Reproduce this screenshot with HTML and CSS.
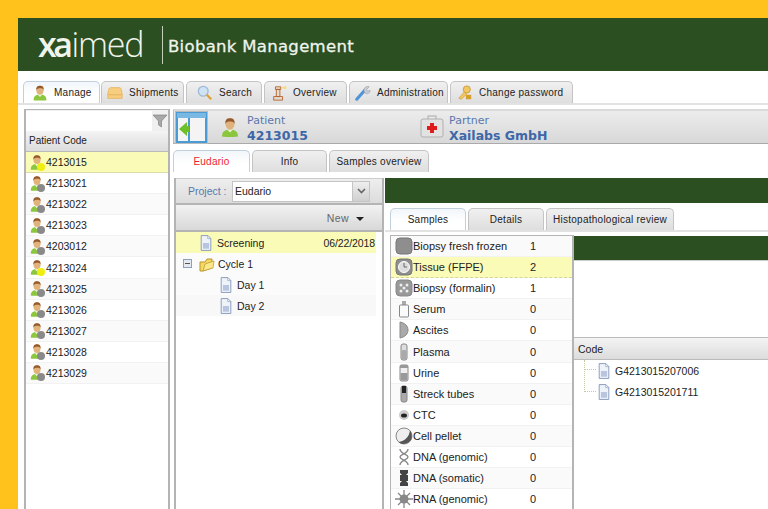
FILE: index.html
```html
<!DOCTYPE html>
<html lang="en">
<head>
    <meta charset="UTF-8">
    <meta name="viewport" content="width=device-width, initial-scale=1.0">
    <title>Xaimed - Biobank Management</title>
    <link rel="stylesheet" href="styles.css">
</head>
<body>
    <svg class="defs" width="0" height="0">
        <symbol id="person" viewBox="0 0 18 20">
            <path d="M1 19c0-5 3-7 8-7s8 2 8 7c0 .6-16 .6-16 0z" fill="#8cc63f"/>
            <path d="M6 12l3 3 3-3z" fill="#e9f3d0"/>
            <ellipse cx="9" cy="6.500" rx="4.500" ry="5.500" fill="#e2b27c"/>
            <path d="M4.400 6.500C4 2 6 .8 9 .8s5 1.200 4.600 5.700C13 4.500 11.500 3.800 9 4 7 4 5 4.500 4.400 6.500z" fill="#96592a"/>
        </symbol>
        <symbol id="doc" viewBox="0 0 16 18">
            <path d="M2.500 .5h7.500l3.500 3.500v13.500h-11z" fill="#eef2f9" stroke="#7f93b8"/>
            <path d="M10 .5v3.500h3.500z" fill="#fff" stroke="#7f93b8" stroke-width=".7"/>
            <rect x="4.500" y="9" width="7" height="6.500" fill="#b9c5de"/>
        </symbol>
    </svg>

    <div class="app">
        <header class="top">
            <div class="logo"><b>xa</b>imed</div>
            <div class="title">Biobank Management</div>
        </header>

        <nav class="tabs main-tabs">
            <div class="tab on">
                <svg class="ic"><use href="#person"/></svg>Manage
            </div>
            <div class="tab">
                <svg class="ic" viewBox="0 0 18 18"><path d="M4 3h10c1.500 0 2 1 3 7v5H1v-5c1-6 1.500-7 3-7z" fill="#f7cd80" stroke="#e8b45e"/><path d="M1 11h16" stroke="#e6b05a"/></svg>Shipments
            </div>
            <div class="tab">
                <svg class="ic" viewBox="0 0 18 18"><circle cx="7" cy="7" r="5.500" fill="#cfe3f5" stroke="#9dbbd8" stroke-width="1.500"/><path d="M11 11l5 5" stroke="#e0a030" stroke-width="2.500"/></svg>Search
            </div>
            <div class="tab">
                <svg class="ic" viewBox="0 0 18 18"><path d="M5 2h6v3H5zM6 5h4v8H6zM3 13h10v4H3z" fill="#e4dccf" stroke="#b5602c"/><path d="M11 3l6-2v4z" fill="#f7dc6f"/></svg>Overview
            </div>
            <div class="tab">
                <svg class="ic" viewBox="0 0 18 18"><path d="M2 16L11 6" stroke="#4f93d8" stroke-width="3.500" stroke-linecap="round"/><path d="M10 6c0-3 3-5 6-4l-3 3 1 2 3-1c0 3-3 5-6 3z" fill="#c9ced6" stroke="#8c949e" stroke-width=".6"/></svg>Administration
            </div>
            <div class="tab">
                <svg class="ic" viewBox="0 0 18 18"><circle cx="11" cy="5" r="4" fill="#f1c663" stroke="#c99a36"/><path d="M8 8l-6 7 3 1 6-6z" fill="#f1c663" stroke="#c99a36" stroke-width=".7"/><rect x="10" y="11" width="6" height="5" fill="#d4a02c"/></svg>Change password
            </div>
        </nav>

        <div class="main">
            <aside class="patients">
                <div class="filter">
                    <div class="filter-input"></div>
                    <svg class="funnel" viewBox="0 0 14 14"><path d="M0 1h14L8.500 7v6l-3-2V7z" fill="#a8a8a8" stroke="#777" stroke-width=".6"/></svg>
                </div>
                <div class="col-head">Patient Code</div>
                <div class="row hl"><span class="pic yes"><svg class="ic"><use href="#person"/></svg></span>4213015</div>
                <div class="row"><span class="pic"><svg class="ic"><use href="#person"/></svg></span>4213021</div>
                <div class="row alt"><span class="pic"><svg class="ic"><use href="#person"/></svg></span>4213022</div>
                <div class="row"><span class="pic"><svg class="ic"><use href="#person"/></svg></span>4213023</div>
                <div class="row alt"><span class="pic"><svg class="ic"><use href="#person"/></svg></span>4203012</div>
                <div class="row"><span class="pic yes"><svg class="ic"><use href="#person"/></svg></span>4213024</div>
                <div class="row alt"><span class="pic"><svg class="ic"><use href="#person"/></svg></span>4213025</div>
                <div class="row"><span class="pic"><svg class="ic"><use href="#person"/></svg></span>4213026</div>
                <div class="row alt"><span class="pic"><svg class="ic"><use href="#person"/></svg></span>4213027</div>
                <div class="row"><span class="pic"><svg class="ic"><use href="#person"/></svg></span>4213028</div>
                <div class="row alt"><span class="pic"><svg class="ic"><use href="#person"/></svg></span>4213029</div>
            </aside>

            <section class="work">
                <div class="banner">
                    <div class="toggle">
                        <svg viewBox="0 0 31 31" width="31" height="31"><rect x="1" y="1" width="29" height="29" fill="#f4f4f4" stroke="#4a9ad4" stroke-width="2"/><rect x="1" y="1" width="29" height="5" fill="#7ab8e4"/><path d="M13 6v24" stroke="#4a9ad4" stroke-width="2"/><path d="M3 17l8-7v4h2v6h-2v4z" fill="#6fbf2a"/></svg>
                    </div>
                    <div class="who">
                        <svg class="who-ic"><use href="#person"/></svg>
                        <div><div class="who-label">Patient</div><div class="who-name">4213015</div></div>
                    </div>
                    <div class="who">
                        <svg class="who-ic" viewBox="0 0 24 24"><rect x="8" y="1" width="8" height="4" fill="none" stroke="#aaa"/><rect x="1" y="4" width="22" height="18" rx="2" fill="#e2e2e2" stroke="#b0b0b0"/><path d="M10 8h4v3h3v4h-3v3h-4v-3H7v-4h3z" fill="#e01b1b"/></svg>
                        <div><div class="who-label">Partner</div><div class="who-name">Xailabs GmbH</div></div>
                    </div>
                </div>

                <nav class="tabs sub-tabs">
                    <div class="tab on red">Eudario</div>
                    <div class="tab">Info</div>
                    <div class="tab">Samples overview</div>
                </nav>

                <div class="split">
                    <div class="visits">
                        <div class="project">
                            <span class="project-label">Project :</span>
                            <div class="select"><span>Eudario</span><i class="select-btn"><svg width="9" height="6" viewBox="0 0 9 6"><path d="M1 1l3.500 3.500L8 1" fill="none" stroke="#666" stroke-width="1.600"/></svg></i></div>
                        </div>
                        <div class="newbar">New<i class="caret"></i></div>
                        <div class="tree">
                            <div class="node hl"><svg class="doc"><use href="#doc"/></svg>Screening<span class="date">06/22/2018</span></div>
                            <div class="node"><i class="minus"></i><svg class="doc folder" viewBox="0 0 16 16"><path d="M1 6h5l2-3h5v9l-9 3H1z" fill="#f6d95f" stroke="#b8952c"/><path d="M4 15l2-7 9-3-1 7z" fill="#fbe88a" stroke="#b8952c" stroke-width=".7"/></svg>Cycle 1</div>
                            <div class="node lvl1"><svg class="doc"><use href="#doc"/></svg>Day 1</div>
                            <div class="node alt lvl1"><svg class="doc"><use href="#doc"/></svg>Day 2</div>
                        </div>
                    </div>

                    <div class="detail">
                        <div class="band"></div>
                        <nav class="tabs inner-tabs">
                            <div class="tab on">Samples</div>
                            <div class="tab">Details</div>
                            <div class="tab">Histopathological review</div>
                        </nav>
                        <div class="samples-wrap">
                            <div class="samples">
                                <div class="s alt"><svg class="si" viewBox="0 0 18 18"><rect x="1" y="1" width="16" height="16" rx="4" fill="#8e8e8e" stroke="#777"/></svg><span>Biopsy fresh frozen</span><em>1</em></div>
                                <div class="s hl"><svg class="si" viewBox="0 0 18 18"><rect x="1" y="1" width="16" height="16" rx="4" fill="#8e8e8e" stroke="#777"/><circle cx="9" cy="9" r="5.500" fill="#ddd" stroke="#fff"/><path d="M9 5v4h3" fill="none" stroke="#666"/></svg><span>Tissue (FFPE)</span><em>2</em></div>
                                <div class="s"><svg class="si" viewBox="0 0 18 18"><rect x="1" y="1" width="16" height="16" rx="4" fill="#999" stroke="#888"/><g fill="#eee"><circle cx="6" cy="6" r="1.500"/><circle cx="12" cy="6" r="1.500"/><circle cx="9" cy="9" r="1.500"/><circle cx="6" cy="12" r="1.500"/><circle cx="12" cy="12" r="1.500"/></g></svg><span>Biopsy (formalin)</span><em>1</em></div>
                                <div class="s alt"><svg class="si" viewBox="0 0 18 18"><path d="M7 1h4v4H7z" fill="#aaa"/><rect x="4.500" y="5" width="9" height="12" rx="1" fill="#fafafa" stroke="#888"/></svg><span>Serum</span><em>0</em></div>
                                <div class="s"><svg class="si" viewBox="0 0 18 18"><path d="M5 1c5 1 8 4 8 8s-3 7-8 8z" fill="#aaa" stroke="#888"/></svg><span>Ascites</span><em>0</em></div>
                                <div class="s alt"><svg class="si" viewBox="0 0 18 18"><rect x="6" y="1" width="6" height="16" rx="2" fill="#ddd" stroke="#888"/><rect x="6.500" y="7" width="5" height="9.500" rx="1.500" fill="#aaa"/></svg><span>Plasma</span><em>0</em></div>
                                <div class="s"><svg class="si" viewBox="0 0 18 18"><rect x="5" y="1" width="8" height="16" rx="1.500" fill="#eee" stroke="#888"/><rect x="5" y="1" width="8" height="3" fill="#999"/><rect x="5.500" y="9" width="7" height="7.500" fill="#999"/></svg><span>Urine</span><em>0</em></div>
                                <div class="s alt"><svg class="si" viewBox="0 0 18 18"><rect x="6" y="1" width="6" height="16" rx="2" fill="#aaa" stroke="#888"/><rect x="7" y="1" width="4" height="7" fill="#222"/></svg><span>Streck tubes</span><em>0</em></div>
                                <div class="s"><svg class="si" viewBox="0 0 18 18"><circle cx="9" cy="9" r="5" fill="#ccc"/><ellipse cx="9" cy="9.500" rx="3" ry="2" fill="#222"/></svg><span>CTC</span><em>0</em></div>
                                <div class="s alt"><svg class="si" viewBox="0 0 18 18"><circle cx="9" cy="9" r="8" fill="#eee" stroke="#888"/><path d="M3.500 15C10 14 14 10 15 3.500 18 8 17 13 14 15s-7 3-10.500 0z" fill="#555"/></svg><span>Cell pellet</span><em>0</em></div>
                                <div class="s"><svg class="si" viewBox="0 0 18 18"><path d="M5 1c0 5 8 5 8 8s-8 3-8 8M13 1c0 5-8 5-8 8s8 3 8 8" fill="none" stroke="#888" stroke-width="1.400"/></svg><span>DNA (genomic)</span><em>0</em></div>
                                <div class="s alt"><svg class="si" viewBox="0 0 18 18"><path d="M5 1h8v3l-2 2h2v6h-2l2 2v3H5v-3l2-2H5V6h2L5 4z" fill="#444"/></svg><span>DNA (somatic)</span><em>0</em></div>
                                <div class="s"><svg class="si" viewBox="0 0 18 18"><path d="M9 0v18M0 9h18M3 3l12 12M15 3L3 15" stroke="#888" stroke-width="1.300"/><circle cx="9" cy="9" r="4.500" fill="#888"/></svg><span>RNA (genomic)</span><em>0</em></div>
                            </div>
                            <div class="items">
                                <div class="items-band"></div>
                                <div class="items-gap"></div>
                                <div class="items-head">Code</div>
                                <div class="items-tree">
                                    <div class="item"><i class="conn"></i><svg class="doc"><use href="#doc"/></svg>G4213015207006</div>
                                    <div class="item"><i class="conn tall"></i><svg class="doc"><use href="#doc"/></svg>G4213015201711</div>
                                </div>
                            </div>
                        </div>
                    </div>
                </div>
            </section>
        </div>
    </div>
</body>
</html>
```

FILE: styles.css
```css
html, body {
    height: 100%;
    overflow: hidden;
}
body {
    margin: 0;
    padding: 18px 0 0 18px;
    box-sizing: border-box;
    background: #ffc11b;
    font-family: "Liberation Sans", Arial, sans-serif;
    font-size: 10.500px;
    color: #222;
}
.defs {
    display: block;
    height: 0;
}
.app {
    background: #fff;
    height: 491px;
    overflow: hidden;
}

/* header */
.top {
    height: 53px;
    background: #2c4f22;
    display: flex;
    align-items: center;
    color: #f0f4ec;
}
.logo {
    width: 124px;
    margin-left: 20px;
    height: 38px;
    line-height: 36px;
    font-family: "Open Sans", sans-serif;
    font-size: 34px;
    font-weight: 300;
    letter-spacing: -1.200px;
    border-right: 1px solid #c4d0bc;
    white-space: nowrap;
}
.logo b {
    font-weight: 600;
    letter-spacing: -3.500px;
    margin-right: 2px;
}
.title {
    margin: 3px 0 0 5px;
    font-family: "DejaVu Sans", sans-serif;
    font-size: 16.500px;
    letter-spacing: .3px;
    -webkit-text-stroke: .3px #f0f4ec;
}

/* tabs */
.tabs {
    display: flex;
    gap: 2px;
    border-bottom: 2px solid #e2e2e2;
}
.tab {
    height: 22px;
    box-sizing: border-box;
    display: flex;
    align-items: center;
    justify-content: center;
    border: 1px solid #c4c4c4;
    border-bottom: none;
    border-radius: 5px 5px 0 0;
    background: linear-gradient(#f0f0f0, #dedede);
    font-size: 10px;
    letter-spacing: .25px;
    white-space: nowrap;
}
.tab.on {
    background: linear-gradient(#f2f6fa, #fff 60%);
    border-color: #c0d0dc;
}
.tab.red {
    color: #f01c2c;
}
.ic {
    width: 16px;
    height: 16px;
    flex: none;
    margin-right: 6px;
}
.main-tabs {
    margin-top: 10px;
    padding-left: 5px;
}
.main-tabs .tab {
    justify-content: flex-start;
    padding-left: 6px;
}
.main-tabs .tab:nth-child(1) { width: 77px; padding-left: 8px; }
.main-tabs .tab:nth-child(2) { width: 83px; margin-left: -1px; padding-left: 5px; }
.main-tabs .tab:nth-child(3) { width: 76px; padding-left: 10px; }
.main-tabs .tab:nth-child(4) { width: 83px; }
.main-tabs .tab:nth-child(5) { width: 99px; padding-left: 5px; }
.main-tabs .tab:nth-child(6) { width: 123px; }

.main {
    display: flex;
    margin-top: 4px;
    gap: 3px;
    height: 400px;
}

/* patient list */
.patients {
    width: 146px;
    margin-left: 6px;
    box-sizing: border-box;
    border: solid #b4b4b4;
    border-width: 1px 2px 0;
    flex: none;
}
.filter {
    height: 21px;
    display: flex;
    align-items: center;
    background: #f0f0f0;
}
.filter-input {
    width: 126px;
    height: 20px;
    background: #fff;
}
.funnel {
    width: 14px;
    height: 14px;
    margin-left: 1px;
}
.col-head {
    height: 20px;
    line-height: 20px;
    padding-left: 3px;
    background: linear-gradient(#f4f4f4, #dcdcdc);
    border-bottom: 1px solid #bbb;
    font-size: 10px;
}
.row {
    height: 21.100px;
    display: flex;
    align-items: center;
    padding-left: 4px;
    box-sizing: border-box;
    border-bottom: 1px solid #f2f2f2;
    background: #fff;
}
.row.alt {
    background: #fafafa;
}
.row.hl {
    background: #fbfbb8;
    border-bottom-color: #dcdca8;
}
.pic {
    position: relative;
    display: flex;
    width: 15px;
    margin-right: 1px;
}
.pic .ic {
    width: 14px;
    height: 17px;
    margin: 0;
}
.pic::after {
    content: "";
    position: absolute;
    right: 0;
    bottom: 0;
    width: 8px;
    height: 8px;
    border-radius: 50%;
    background: #8a8a8a;
}
.pic.yes::after {
    background: #f0ee10;
}

/* right side */
.work {
    flex: 1;
    min-width: 0;
}
.banner {
    height: 35px;
    box-sizing: border-box;
    display: flex;
    align-items: center;
    background: linear-gradient(#ececec, #d8d8d8);
    border-top: 2px solid #dadada;
    border-bottom: 1px solid #aaa;
    border-left: 1px solid #bbb;
}
.toggle {
    width: 33px;
    height: 33px;
    display: flex;
    align-items: center;
    justify-content: center;
    margin-left: 1px;
    background: #bbb;
    flex: none;
}
.who {
    display: flex;
    align-items: center;
    margin-left: 13px;
    width: 199px;
}
.who + .who {
    margin-left: 0;
}
.who-ic {
    width: 18px;
    height: 21px;
    margin-right: 8px;
    flex: none;
}
.who + .who .who-ic {
    width: 24px;
    height: 24px;
    margin-right: 5px;
}
.who-label {
    margin-top: 2px;
    font-family: "DejaVu Sans", sans-serif;
    font-size: 11px;
    color: #5a78ad;
    line-height: 14px;
}
.who-name {
    font-family: "DejaVu Sans", sans-serif;
    font-size: 12.500px;
    font-weight: bold;
    color: #3e67a8;
    line-height: 15px;
    white-space: nowrap;
}
.sub-tabs {
    margin-top: 6px;
    border-bottom: none;
}
.sub-tabs .tab:nth-child(1) { width: 77px; }
.sub-tabs .tab:nth-child(2) { width: 75px; }
.sub-tabs .tab:nth-child(3) { width: 100px; }
.split {
    display: flex;
    margin-top: 6px;
    margin-left: 1px;
}

/* visits */
.visits {
    width: 210px;
    flex: none;
    box-sizing: border-box;
    border-left: 2px solid #b4b4b4;
    border-right: 2px solid #b4b4b4;
    height: 340px;
}
.project {
    height: 27px;
    box-sizing: border-box;
    display: flex;
    align-items: center;
    padding-left: 12px;
    background: linear-gradient(#eee, #dcdcdc);
    border-top: 1px solid #ccc;
    border-bottom: 2px solid #b4b4b4;
}
.project-label {
    width: 44px;
    flex: none;
    color: #5a78ad;
}
.select {
    width: 138px;
    height: 21px;
    box-sizing: border-box;
    display: flex;
    align-items: center;
    justify-content: space-between;
    padding-left: 2px;
    background: #fff;
    border: 1px solid #c4c4c4;
}
.select-btn {
    width: 16px;
    height: 19px;
    display: flex;
    align-items: center;
    justify-content: center;
    background: linear-gradient(#eee, #d0d0d0);
    border-left: 1px solid #c4c4c4;
}
.newbar {
    height: 27px;
    box-sizing: border-box;
    display: flex;
    align-items: center;
    justify-content: flex-end;
    padding-right: 18px;
    background: linear-gradient(#f2f2f2, #d8d8d8);
    border-bottom: 2px solid #b4b4b4;
    color: #666;
    letter-spacing: .4px;
}
.caret {
    width: 0;
    height: 0;
    margin-left: 7px;
    margin-top: 2px;
    border: 4px solid transparent;
    border-top-color: #222;
    border-bottom: none;
}
.tree {
    padding-right: 6px;
}
.node {
    height: 21px;
    display: flex;
    align-items: center;
    background: #fbfbfb;
}
.node.hl {
    background: #fbfbb8;
    padding-left: 23px;
}
.node.alt {
    background: #f8f8f8;
}
.node.lvl1 {
    padding-left: 43px;
}
.node .doc {
    margin-right: 4px;
}
.doc {
    width: 14px;
    height: 16px;
    flex: none;
}
.doc.folder {
    width: 16px;
    height: 16px;
    margin-right: 3px;
}
.minus {
    width: 7px;
    height: 7px;
    border: 1px solid #8ba0bc;
    margin: 0 7px 0 7px;
    background: linear-gradient(#555, #555) center / 5px 1px no-repeat, #e4eaf0;
}
.date {
    margin-left: auto;
    margin-right: 1px;
    letter-spacing: -.1px;
}

/* samples */
.detail {
    flex: 1;
    min-width: 0;
    margin-left: 1px;
}
.band {
    height: 25px;
    background: #2c4f22;
}
.inner-tabs {
    margin-top: 5px;
    padding-left: 5px;
}
.inner-tabs .tab:nth-child(1) { width: 76px; }
.inner-tabs .tab:nth-child(2) { width: 76px; }
.inner-tabs .tab:nth-child(3) { width: 128px; }
.samples-wrap {
    display: flex;
    margin-top: 3px;
    margin-left: 5px;
}
.samples {
    width: 184px;
    flex: none;
    box-sizing: border-box;
    border: solid #b4b4b4;
    border-width: 1px 2px 0 1px;
}
.s {
    height: 21.100px;
    box-sizing: border-box;
    display: flex;
    align-items: center;
    border-bottom: 1px solid #f2f2f2;
    background: #fff;
}
.s.alt {
    background: #fafafa;
}
.s.hl {
    background: #fbfbb8;
    border-bottom: 1px dashed #d4d4a0;
}
.s span {
    width: 117px;
    font-size: 11px;
}
.s em {
    font-style: normal;
    font-size: 11px;
}
.si {
    width: 18px;
    height: 18px;
    flex: none;
    margin-left: 4px;
}
.items {
    flex: 1;
    min-width: 0;
    margin-top: 1px;
}
.items-band {
    height: 24px;
    background: #2c4f22;
    border-bottom: 1px solid #ccc;
}
.items-gap {
    height: 76px;
}
.items-head {
    height: 23px;
    line-height: 22px;
    box-sizing: border-box;
    padding-left: 4px;
    background: linear-gradient(#f4f4f4, #dcdcdc);
    border-top: 1px solid #bbb;
    border-bottom: 1px solid #bbb;
}
.items-tree {
    padding-left: 10px;
}
.item {
    height: 21px;
    display: flex;
    align-items: center;
}
.conn {
    width: 12px;
    height: 10px;
    margin: 0 1px 11px 0;
    box-sizing: border-box;
    border: dotted #c8c8a0;
    border-width: 0 0 1px 1px;
}
.conn.tall {
    height: 21px;
    margin-bottom: 21px;
}
.item .doc {
    margin-right: 4px;
}
```
